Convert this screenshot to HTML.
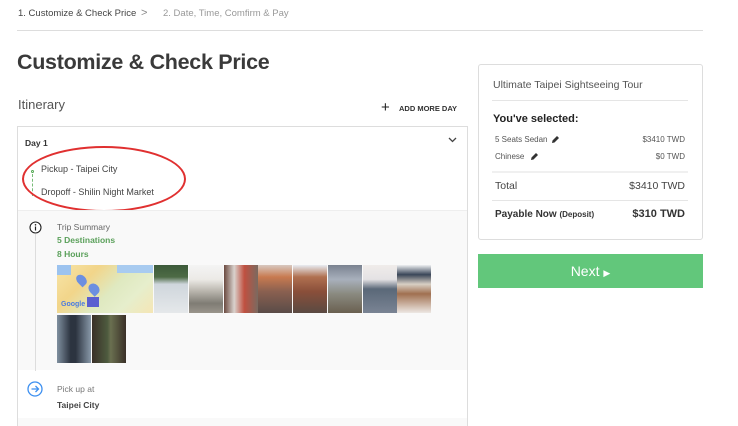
<!DOCTYPE html>
<html><head><meta charset="utf-8"><style>
*{margin:0;padding:0;box-sizing:border-box}
html,body{width:738px;height:426px;overflow:hidden}
body{background:#fff;font-family:"Liberation Sans",sans-serif;color:#333;position:relative}
.a{position:absolute;white-space:nowrap}
.img{position:absolute;width:34px;height:48px}
</style></head><body>
<div class="a" style="left:18px;top:8px;font-size:9.5px;color:#444">1. Customize &amp; Check Price</div>
<div class="a" style="left:141px;top:7px;font-size:11px;color:#888">&gt;</div>
<div class="a" style="left:163px;top:8px;font-size:9.5px;color:#999">2. Date, Time, Comfirm &amp; Pay</div>
<div class="a" style="left:17px;top:30px;width:686px;height:1px;background:#ddd"></div>
<div class="a" style="left:17px;top:50px;font-size:21.5px;font-weight:bold;color:#3a3a3a;letter-spacing:-0.3px">Customize &amp; Check Price</div>
<div class="a" style="left:18px;top:97px;font-size:13px;color:#555">Itinerary</div>
<div class="a" style="left:381px;top:101px;font-size:15px;color:#222;line-height:14px">+</div>
<div class="a" style="left:399px;top:104px;font-size:7.5px;font-weight:bold;color:#333">ADD MORE DAY</div>

<div class="a" style="left:17px;top:126px;width:451px;height:320px;border:1px solid #ddd;background:#fff"></div>
<div class="a" style="left:25px;top:138px;font-size:8.5px;font-weight:bold;color:#333">Day 1</div>
<svg class="a" style="left:448px;top:137px" width="9" height="6"><path d="M1 1l3.5 3.5L8 1" stroke="#444" stroke-width="1.3" fill="none"/></svg>
<div class="a" style="left:31px;top:170px;width:3px;height:3px;border:1px solid #5a5;border-radius:50%"></div>
<div class="a" style="left:32px;top:174px;height:22px;border-left:1px dashed #7b7"></div>
<div class="a" style="left:41px;top:164px;font-size:9px;color:#444">Pickup - Taipei City</div>
<div class="a" style="left:41px;top:187px;font-size:9px;color:#444">Dropoff - Shilin Night Market</div>
<div class="a" style="left:22px;top:146px;width:164px;height:66px;border:2px solid #e03030;border-radius:50%"></div>

<div class="a" style="left:18px;top:210px;width:449px;height:160px;background:#f9f9f9;border-top:1px solid #eee"></div>
<div class="a" style="left:18px;top:418px;width:449px;height:10px;background:#f9f9f9"></div>
<div class="a" style="left:35px;top:234px;width:1px;height:184px;background:#ddd"></div>
<svg class="a" style="left:29px;top:221px" width="13" height="13"><circle cx="6.5" cy="6.5" r="5.5" stroke="#222" stroke-width="1.1" fill="#fff"/><path d="M6.5 5.5v4" stroke="#222" stroke-width="1.2"/><circle cx="6.5" cy="3.8" r=".8" fill="#222"/></svg>
<div class="a" style="left:57px;top:222px;font-size:8.5px;color:#666">Trip Summary</div>
<div class="a" style="left:57px;top:235px;font-size:8.5px;font-weight:bold;color:#5aa05a">5 Destinations</div>
<div class="a" style="left:57px;top:249px;font-size:8.5px;font-weight:bold;color:#5aa05a">8 Hours</div>

<div class="a" style="left:57px;top:265px;width:96px;height:48px;background:linear-gradient(135deg,#f7e5a8 0%,#f2d58a 30%,#dfe9c0 55%,#e6eecc 75%,#f5e6b5 100%)">
<div class="a" style="left:0;top:0;width:14px;height:10px;background:#9cc3ef"></div>
<div class="a" style="left:60px;top:0;width:36px;height:8px;background:#a8cbf0"></div>
<div class="a" style="left:20px;top:9px;width:9px;height:12px;border-radius:50% 50% 50% 0;background:#6c8fe0;transform:rotate(-45deg)"></div>
<div class="a" style="left:32px;top:18px;width:10px;height:12px;border-radius:50% 50% 50% 0;background:#6c8fe0;transform:rotate(-45deg)"></div>
<div class="a" style="left:30px;top:32px;width:12px;height:10px;background:#5b5fd0"></div>
<div class="a" style="left:4px;top:36px;font-size:7px;color:#4a7be0;font-weight:bold">Google</div>
</div>
<div class="img" style="left:154px;top:265px;background:linear-gradient(#3c5a3a 0,#4d6b45 25%,#cfd6dc 40%,#e5e8ea 100%)"></div>
<div class="img" style="left:189px;top:265px;background:linear-gradient(#f4f4f4 0,#eceae6 30%,#b8b4ac 55%,#7f7c74 80%,#9a958c 100%)"></div>
<div class="img" style="left:224px;top:265px;background:linear-gradient(90deg,#6b4a40,#d9d2cd 30%,#c05040 60%,#7a6a60);"></div>
<div class="img" style="left:258px;top:265px;background:linear-gradient(#d8c8c0 0,#c87a50 25%,#8a6050 55%,#5a4c48 100%)"></div>
<div class="img" style="left:293px;top:265px;background:linear-gradient(#e8ecf2 0,#b07050 25%,#8a4f3a 55%,#5a4a42 100%)"></div>
<div class="img" style="left:328px;top:265px;background:linear-gradient(#7a8290 0,#a8b0bc 30%,#8a8a80 60%,#6a6050 100%)"></div>
<div class="img" style="left:363px;top:265px;background:linear-gradient(#f0ecea 0,#e4e2e4 30%,#5a6878 50%,#7a8494 100%)"></div>
<div class="img" style="left:397px;top:265px;background:linear-gradient(#eef0f2 0,#3a4658 20%,#d8cfc4 40%,#a07050 60%,#ede8e4 100%)"></div>
<div class="img" style="left:57px;top:315px;background:linear-gradient(90deg,#8090a0,#2c3440 40%,#2c3440 55%,#8898a8)"></div>
<div class="img" style="left:92px;top:315px;background:linear-gradient(90deg,#3a3028,#4d5a3e 45%,#6a7050 55%,#3a3028)"></div>

<div class="a" style="left:18px;top:371px;width:449px;height:47px;background:#fff"></div>
<svg class="a" style="left:27px;top:381px" width="16" height="16"><circle cx="8" cy="8" r="7" stroke="#3c8ff0" stroke-width="1.3" fill="#fff"/><path d="M4.5 8h7M8.5 5l3 3-3 3" stroke="#3c8ff0" stroke-width="1.3" fill="none"/></svg>
<div class="a" style="left:57px;top:384px;font-size:8.5px;color:#777">Pick up at</div>
<div class="a" style="left:57px;top:400px;font-size:8.5px;font-weight:bold;color:#444">Taipei City</div>

<div class="a" style="left:478px;top:64px;width:225px;height:176px;border:1px solid #ddd;border-radius:3px"></div>
<div class="a" style="left:493px;top:79px;font-size:10.5px;color:#555">Ultimate Taipei Sightseeing Tour</div>
<div class="a" style="left:492px;top:100px;width:196px;height:1px;background:#e5e5e5"></div>
<div class="a" style="left:493px;top:113px;font-size:11px;font-weight:bold;color:#222">You've selected:</div>
<div class="a" style="left:495px;top:135px;font-size:8px;color:#555">5 Seats Sedan</div>
<svg class="a" style="left:551px;top:135px" width="9" height="9"><path d="M1 8l.5-2.5L6 1l2 2-4.5 4.5z" fill="#333"/></svg>
<div class="a" style="right:53px;top:135px;font-size:8px;color:#555">$3410 TWD</div>
<div class="a" style="left:495px;top:152px;font-size:8px;color:#555">Chinese</div>
<svg class="a" style="left:530px;top:152px" width="9" height="9"><path d="M1 8l.5-2.5L6 1l2 2-4.5 4.5z" fill="#333"/></svg>
<div class="a" style="right:53px;top:152px;font-size:8px;color:#555">$0 TWD</div>
<div class="a" style="left:492px;top:171px;width:196px;height:2px;background:#f0f0f0"></div>
<div class="a" style="left:495px;top:180px;font-size:10.5px;color:#444">Total</div>
<div class="a" style="right:53px;top:180px;font-size:10.5px;color:#444">$3410 TWD</div>
<div class="a" style="left:492px;top:200px;width:196px;height:1px;background:#e5e5e5"></div>
<div class="a" style="left:495px;top:209px;font-size:10px;font-weight:bold;color:#333">Payable Now <span style="font-size:8px">(Deposit)</span></div>
<div class="a" style="right:53px;top:208px;font-size:11px;font-weight:bold;color:#333">$310 TWD</div>

<div class="a" style="left:478px;top:254px;width:225px;height:34px;background:#62c77b;color:#fff;font-size:14px;text-align:center;line-height:34px">Next <span style="font-size:9px">&#9654;</span></div>
</body></html>
